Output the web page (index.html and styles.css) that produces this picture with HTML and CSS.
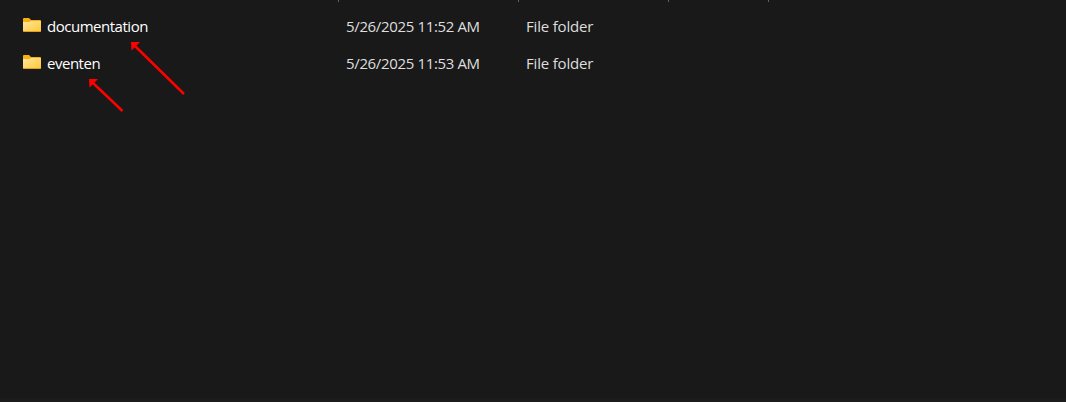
FILE: index.html
```html
<!DOCTYPE html>
<html lang="en">
<head>
<meta charset="utf-8">
<title>Files</title>
<link rel="stylesheet" href="styles.css">
</head>
<body>
<svg width="0" height="0" class="defs">
  <defs>
    <linearGradient id="front" x1="0" y1="0" x2="1" y2="1"><stop offset="0" stop-color="#ffe69d"/><stop offset="1" stop-color="#ffc937"/></linearGradient>
    <symbol id="folder" viewBox="0 0 18 14">
      <path d="M0 1Q0 0 1 0H6L8 2H17Q18 2 18 3V13H0Z" fill="#f5b012"/>
      <path d="M0 4H6.5L8 3H18V13Q18 13.500 17 13.500H1Q0 13.500 0 13Z" fill="url(#front)"/>
      <path d="M.3 13.500H17.700" stroke="#dfa020" stroke-width="1"/>
    </symbol>
  </defs>
</svg>
<main class="list">
  <div class="header"><i></i><i></i><i></i><i></i></div>
  <div class="row">
    <svg class="icon"><use href="#folder"/></svg>
    <span class="name">documentation</span><span class="date">5/26/2025 11:52 AM</span><span class="type">File folder</span>
  </div>
  <div class="row">
    <svg class="icon"><use href="#folder"/></svg>
    <span class="name">eventen</span><span class="date">5/26/2025 11:53 AM</span><span class="type">File folder</span>
  </div>
</main>
<svg class="arrows" width="1066" height="402">
  <path d="M184 94L135 46M122.500 111L93 83" stroke="#f00" stroke-width="2.500" fill="none"/>
  <path d="M131 42H140L131.500 50.500ZM89 79H98L89.500 87.500Z" fill="#f00"/>
</svg>
</body>
</html>
```
FILE: styles.css
```css
body {
  margin: 0;
  height: 402px;
  overflow: hidden;
  background: #191919;
  color: #dedede;
  font: 15px/20px "Open Sans", "Noto Sans", sans-serif;
}
.defs { display: block; }
.list {
  height: 398px;
  border-bottom: 4px solid #1c1c1c;
}
.header {
  display: grid;
  grid-template-columns: 180px 150px 100px 1px;
  padding-left: 338px;
  height: 8px;
}
.header i {
  width: 1px;
  height: 2px;
  background: #636363;
}
.row {
  display: grid;
  grid-template-columns: 24px 299px 180px 200px;
  align-items: center;
  padding-left: 23px;
  height: 37px;
  white-space: nowrap;
}
.row span { padding-bottom: 2px; }
.icon {
  width: 18px;
  height: 14px;
  margin-bottom: 3px;
}
.name {
  color: #fff;
  letter-spacing: -0.48px;
}
.date { letter-spacing: -0.35px; }
.type { letter-spacing: -0.18px; }
.arrows {
  position: absolute;
  left: 0;
  top: 0;
}
```
